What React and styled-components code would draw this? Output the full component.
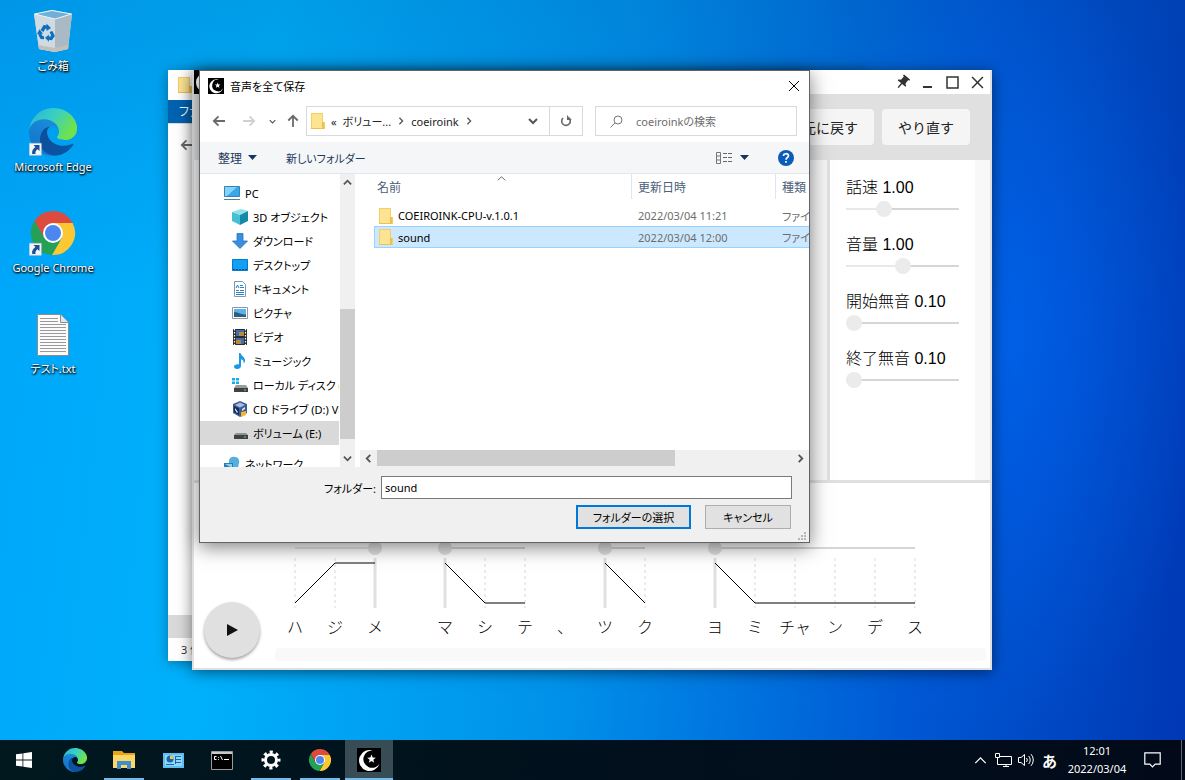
import { useId, useState } from 'react';
import styled, { createGlobalStyle, css } from 'styled-components';
import { MdPushPin } from 'react-icons/md';

const GlobalStyle = createGlobalStyle`
  * {
    box-sizing: border-box;
  }

  body {
    margin: 0;
    font-family: "Noto Sans", "Noto Sans CJK JP", sans-serif;
    font-size: 12px;
    font-feature-settings: "palt";
    color: #000;
  }

  button, input {
    font: inherit;
    font-feature-settings: inherit;
    color: inherit;
  }

  button {
    padding: 0;
    border: 0;
    background: none;
  }

  ul {
    margin: 0;
    padding: 0;
    list-style: none;
  }

  svg {
    display: block;
    flex: none;
  }
`

/* Desktop */
const Screen = styled.div`
  display: flex;
  flex-direction: column;
  height: 100vh;
  overflow: hidden;
`

const Desktop = styled.main`
  position: relative;
  flex: 1;
  min-height: 0;
  background:
    radial-gradient(ellipse 200px 400px at 85% 46%, rgba(0, 110, 255, 0.5), transparent),
    linear-gradient(180deg, rgba(0, 50, 120, 0.14), transparent 40%),
    linear-gradient(97deg, #00a6fa 0%, #00b0fb 22%, #0092ea 50%, #0058d4 78%, #0038b4 100%);
`

const DesktopIcons = styled.ul`
  width: 106px;
  padding-top: 7px;
`

const DesktopItem = styled.li`
  height: 101px;
`

const DesktopButton = styled.button`
  display: flex;
  flex-direction: column;
  align-items: center;
  gap: 1px;
  width: 100%;
  color: #fff;
  font-size: 11px;
  line-height: 20px;
  text-shadow: 0 1px 2px #000, 1px 1px 2px #000;
`

/* Windows */
const Window = styled.section`
  position: absolute;
  display: flex;
  flex-direction: column;
  background: #fff;
`

const ExplorerWindow = styled(Window)`
  top: 70px;
  left: 168px;
  right: 320px;
  bottom: 79px;
  box-shadow: 0 2px 12px rgba(0, 0, 0, 0.35);
`

const ExplorerTitle = styled.header`
  display: flex;
  align-items: center;
  height: 30px;
  padding-left: 10px;
`

const Ribbon = styled.div`
  height: 24px;
  padding-left: 11px;
  border-bottom: 1px solid #dadbdc;
  background: #0063b1;
  color: #fff;
  line-height: 23px;
`

const ExplorerNav = styled.div`
  flex: 1;
  padding: 14px 12px;
`

const ExplorerScroll = styled.div`
  height: 23px;
  background: #d9d9d9;
`

const ExplorerStatus = styled.footer`
  padding-left: 13px;
  color: #333;
  font-size: 11px;
  line-height: 23px;
`

/* Voice editor */
const EditorWindow = styled(Window)`
  top: 70px;
  left: 192px;
  right: 193px;
  bottom: 70px;
  border: 2px solid #e0e0e0;
  border-top: 0;
  box-shadow: 0 2px 14px rgba(0, 0, 0, 0.5);
  font-family: "Liberation Sans", "Noto Sans CJK JP", sans-serif;
  font-feature-settings: normal;
  font-weight: 300;
`

const EditorTitle = styled.header`
  display: flex;
  justify-content: space-between;
  height: 24px;
`

const WindowButtons = styled.div`
  display: flex;
`

const WindowButton = styled.button`
  display: grid;
  place-items: center;
  width: 25px;
  height: 24px;
  color: #333;
`

const PinIcon = styled(MdPushPin)`
  transform: rotate(40deg);
`

const EditorToolbar = styled.div`
  display: flex;
  justify-content: flex-end;
  gap: 8px;
  padding: 15px 20px;
  background: #e0e0e0;
`

const ToolbarButton = styled.button`
  height: 36px;
  padding: 0 16px;
  border-radius: 4px;
  background: #f5f5f5;
  color: #222;
  font-size: 14px;
  font-weight: 400;
`

const EditorBody = styled.div`
  display: flex;
  flex: 1;
  min-height: 0;
  border-bottom: 3px solid #e0e0e0;
`

const TextPane = styled.div`
  flex: 1;
  border-right: 3px solid #e0e0e0;
  background: #f6f6f6;
`

const ParamPane = styled.div`
  display: flex;
  flex-direction: column;
  gap: 16px;
  width: 160px;
  padding: 16px 31px 16px 16px;
  background: linear-gradient(270deg, #f8f8f8 15px, #fff 15px);
`

const Param = styled.div`
  display: grid;
  gap: 1px;

  label {
    font-size: 16px;
    line-height: 24px;
    white-space: nowrap;
  }
`

const Range = styled.input`
  display: block;
  width: 100%;
  height: ${p => p.$thumb}px;
  margin: 0;
  appearance: none;
  background: linear-gradient(90deg, #e8e8e8 ${p => p.$percent}%, #d6d6d6 ${p => p.$percent}%)
    center / ${p => p.$inset ? `calc(100% - ${p.$thumb}px)` : '100%'} 2px no-repeat;

  &::-webkit-slider-thumb {
    appearance: none;
    width: ${p => p.$thumb}px;
    height: ${p => p.$thumb}px;
    border-radius: 50%;
    background: ${p => p.$inset ? '#e0e0e0' : '#ebebeb'};
  }
`

const AccentPane = styled.div`
  display: flex;
  align-items: flex-end;
  height: 185px;
`

const PlayButton = styled.button`
  display: grid;
  place-items: center;
  width: 56px;
  height: 56px;
  margin: 0 15px 10px 10px;
  border-radius: 50%;
  background: #e0e0e0;
  box-shadow: 0 2px 3px rgba(0, 0, 0, 0.35);
`

const AccentArea = styled.div`
  flex: 1;
  min-width: 0;
  padding: 0 4px 7px 0;
`

const Phrases = styled.div`
  display: flex;
  align-items: flex-end;
  margin-bottom: 8px;
`

const PhraseBox = styled.div`
  display: flex;
  flex: none;
  flex-direction: column;
  gap: 3px;
  width: ${p => p.$count * 40}px;
  margin-right: ${p => p.$last ? '30px' : 0};
`

const PhraseSlider = styled.div`
  padding: 0 13px;
`

const Moras = styled.div`
  display: flex;
  padding-top: 5px;
`

const Mora = styled.span`
  flex: none;
  width: 40px;
  font-size: 16px;
  line-height: 24px;
  text-align: center;
`

const AccentScroll = styled.div`
  height: 13px;
  border-radius: 4px;
  background: #f9f9f9;
`

/* Folder dialog */
const DialogWindow = styled(Window)`
  top: 70px;
  left: 199px;
  right: 375px;
  bottom: 197px;
  border: 1px solid #636363;
  box-shadow: 0 4px 18px rgba(0, 0, 0, 0.5);
`

const DialogTitle = styled.header`
  display: flex;
  align-items: center;
  gap: 6px;
  height: 29px;
  padding: 0 9px 0 8px;

  h1 {
    flex: 1;
    margin: 0;
    font-size: 11px;
    font-weight: 400;
  }
`

const NavRow = styled.div`
  display: flex;
  align-items: center;
  padding: 6px 12px;
`

const NavButton = styled.button`
  display: grid;
  place-items: center;
  width: ${p => p.$width}px;
  height: 28px;
  margin-left: ${p => p.$gap || 0}px;
`

const AddressBar = styled.div`
  display: flex;
  flex: 1;
  align-items: center;
  height: 30px;
  margin: 0 12px 0 6px;
  border: 1px solid #d9d9d9;
`

const Crumbs = styled.div`
  display: flex;
  flex: 1;
  align-items: center;
  gap: 6px;
  padding-left: 4px;
  color: #222;
  font-size: 11px;
`

const RefreshButton = styled(NavButton)`
  border-left: 1px solid #d9d9d9;
`

const SearchBox = styled.label`
  display: flex;
  align-items: center;
  gap: 13px;
  width: 202px;
  height: 30px;
  padding-left: 14px;
  border: 1px solid #d9d9d9;

  input {
    flex: 1;
    min-width: 0;
    padding: 0;
    border: 0;
    outline: 0;
    background: none;
    font-size: 11px;
  }

  input::placeholder {
    color: #6d6d6d;
  }
`

const CommandBar = styled.div`
  display: flex;
  align-items: center;
  height: 32px;
  padding: 0 15px 0 18px;
  border-bottom: 1px solid #e3e8ee;
  background: #f5f6f7;
  color: #1e395b;
`

const CommandButton = styled.button`
  display: flex;
  align-items: center;
  gap: 6px;
  margin-right: ${p => p.$gap}px;
  font-size: ${p => p.$small ? 11 : 12}px;
`

const Spacer = styled.div`
  flex: 1;
`

const DialogBody = styled.div`
  display: flex;
  flex: 1;
  min-height: 0;
`

const Tree = styled.ul`
  width: 139px;
  padding-top: 7px;
  overflow: hidden;
`

const TreeItem = styled.li`
  margin-top: ${p => p.$apart ? '7px' : 0};
  background: ${p => p.$selected ? '#d9d9d9' : 'none'};
`

const TreeButton = styled.button`
  display: flex;
  align-items: center;
  gap: 5px;
  width: 100%;
  height: 24px;
  padding-left: ${p => p.$child ? 32 : 24}px;
  font-size: 11px;
  white-space: nowrap;
`

const ScrollTrack = styled.div`
  display: flex;
  flex-direction: ${p => p.$vertical ? 'column' : 'row'};
  background: #f0f0f0;
  ${p => p.$vertical ? css`
    width: 15px;
    margin: 0 5px 0 1px;
  ` : css`
    height: 17px;
    padding-bottom: 1px;
  `}
`

const ScrollButton = styled.button`
  display: grid;
  place-items: center;
  flex: 0 0 17px;
`

const ScrollPart = styled.div`
  flex: ${p => p.$grow} 0 0;
  background: ${p => p.$thumb ? '#cdcdcd' : 'none'};
`

const FileList = styled.div`
  display: flex;
  flex: 1;
  flex-direction: column;
  min-width: 0;
`

const TableArea = styled.div`
  flex: 1;
  padding-left: 14px;
  overflow: hidden;
`

const FileTable = styled.table`
  width: 100%;
  border-collapse: separate;
  border-spacing: 0;
  table-layout: fixed;
`

const HeadCell = styled.th`
  position: relative;
  width: ${p => p.$width ? `${p.$width}px` : 'auto'};
  height: 25px;
  padding: 0 0 0 ${p => p.$first ? 3 : 6}px;
  border-right: ${p => p.$end ? 0 : '1px solid #e2e6ea'};
  color: #4c607a;
  font-weight: 400;
  text-align: left;
  white-space: nowrap;

  svg {
    position: absolute;
    top: 0;
    left: 48%;
  }
`

const FileRow = styled.tr`
  td {
    height: ${p => p.$selected ? 22 : 21}px;
    padding: 0 0 0 6px;
    border: solid ${p => p.$selected ? '#99d1ff' : 'transparent'};
    border-width: ${p => p.$selected ? '1px 0' : 0};
    background: ${p => p.$selected ? '#cce8ff' : 'none'};
    color: #6d6d6d;
    font-size: 11px;
    white-space: nowrap;
    overflow: hidden;
  }

  td:first-child {
    padding-left: ${p => p.$selected ? 4 : 5}px;
    border-left-width: ${p => p.$selected ? '1px' : 0};
    color: #000;
  }
`

const TableGap = styled.tbody`
  td {
    height: 6px;
    padding: 0;
  }
`

const FileName = styled.span`
  display: flex;
  align-items: center;
  gap: 5px;
`

const DialogFooter = styled.form`
  display: flex;
  flex-direction: column;
  gap: 6px;
  padding: 9px 17px 13px 0;
  background: #f0f0f0;
`

const FolderField = styled.div`
  display: flex;
  align-items: center;
  gap: 5px;

  label {
    width: 176px;
    font-size: 11px;
    text-align: right;
  }

  input {
    flex: 1;
    min-width: 0;
    height: 23px;
    padding: 0 3px;
    border: 1px solid #7a7a7a;
    outline: 0;
    background: #fff;
    font-size: 11px;
  }
`

const DialogButtons = styled.div`
  display: flex;
  justify-content: flex-end;
  gap: 14px;
  padding-right: 1px;
`

const DialogButton = styled.button`
  width: ${p => p.$primary ? 115 : 86}px;
  height: 24px;
  border: ${p => p.$primary ? '2px solid #0078d7' : '1px solid #adadad'};
  background: #e1e1e1;
  font-size: 11px;
`

const Grip = styled.svg`
  position: absolute;
  right: 3px;
  bottom: 2px;
`

/* Taskbar */
const Taskbar = styled.footer`
  display: flex;
  height: 40px;
  background: linear-gradient(90deg, #01181f, #010f1c 60%, #020a19);
  color: #fff;
`

const TaskButton = styled.button`
  display: grid;
  place-items: center;
  position: relative;
  width: 48px;
  margin-right: ${p => p.$start ? 3 : 1}px;
  background: ${p => p.$active ? '#384c55' : 'none'};

  &::after {
    content: "";
    display: ${p => p.$open ? 'block' : 'none'};
    position: absolute;
    bottom: 0;
    width: ${p => p.$active ? '100%' : '40px'};
    height: 2px;
    background: #76b9ed;
  }
`

const TrayButton = styled.button`
  display: grid;
  place-items: center;
  width: ${p => p.$wide ? 38 : 23}px;
  font-size: 15px;
  font-weight: 700;
`

const Clock = styled.button`
  width: 72px;
  font-size: 11px;
  line-height: 18px;
`

const ShowDesktop = styled.button`
  width: 4px;
  margin-left: 10px;
  border-left: 1px solid #5a6470;
`

/* Icons */
const Logo = ({ size }) => (
  <svg width={size} height={size} viewBox="0 0 24 24">
    <path fill="#000" d="M0 0h24v24H0z" />
    <path fill="#fff" d="M16 2.500A10.500 10.500 0 1 0 22.600 15.500 8.700 8.700 0 1 1 16 2.500z" />
    <path fill="#fff" d="M14.500 6.600l1.100 3 3.200.1-2.500 2 .9 3.100-2.700-1.800-2.700 1.800.9-3.100-2.500-2 3.200-.1z" />
  </svg>
)

const Folder = () => (
  <svg width="14" height="16" viewBox="0 0 14 16">
    <path fill="#f4cf66" d="M0 0h12v9h2v7H0z" />
    <path fill="#fde493" d="M1 1h10v14H1z" />
    <path fill="#eec14e" d="M11 9h2v6h-2zM0 15h13v1H0z" />
  </svg>
)

const Shortcut = ({ y }) => (
  <g transform={`translate(0 ${y})`}>
    <path fill="#f4f6f8" stroke="#b9c4cc" strokeWidth=".6" d="M.3.300h12v12H.3z" />
    <path fill="#1c4f96" d="M4.500 2H10.500v6L8.500 6.200C6.600 7.500 6.200 9 6.500 11H3.200C2.600 8 4 5.700 6.400 4z" />
  </g>
)

const EdgeIcon = ({ size, shortcut }) => {
  const id = useId();
  return (
    <svg width={size} height={size} viewBox="0 0 48 48">
      <defs>
        <linearGradient id={id + 'a'} x1="0" y1="0" x2="1" y2=".5">
          <stop offset="0" stopColor="#2bb1dd" />
          <stop offset=".5" stopColor="#38cfc4" />
          <stop offset="1" stopColor="#70e34a" />
        </linearGradient>
        <linearGradient id={id + 'b'} x1=".8" y1="0" x2=".3" y2="1">
          <stop offset="0" stopColor="#1b8fdc" />
          <stop offset="1" stopColor="#1272c9" />
        </linearGradient>
        <linearGradient id={id + 'c'} x1="0" y1=".5" x2="1" y2=".6">
          <stop offset="0" stopColor="#0d4f9c" />
          <stop offset="1" stopColor="#0a56a5" />
        </linearGradient>
      </defs>
      <g transform="scale(.1875)">
        <path fill={`url(#${id}b)`} d="M105.700 241.400a79.200 79.200 0 0 1-22.700-21.300 80.700 80.700 0 0 1 29.500-120c3.200-1.500 8.400-4.100 15.500-4 10.100.1 19.600 4.900 25.700 13 4 5.300 6.300 11.900 6.300 18.700 0-.2 24.500-79.600-80-79.600-43.900 0-80 41.700-80 78.200-.2 19.300 4 38.500 12.100 56a128 128 0 0 0 156.400 67.100 75.400 75.400 0 0 1-62.800-8.100z" />
        <path fill={`url(#${id}c)`} d="M231 190.500c-3.400 1.800-6.900 3.400-10.500 4.700a101.700 101.700 0 0 1-35.900 6.500c-47.300 0-88.500-32.500-88.500-74.300.1-11.400 6.400-21.900 16.400-27.300-42.800 1.800-53.800 46.400-53.800 72.500 0 74 68.100 81.400 82.800 81.400 7.900 0 19.800-2.300 27-4.600l1.300-.4a128 128 0 0 0 66.600-52.800c1.200-1.900.6-4.300-1.200-5.500-1.300-.8-2.900-.9-4.200-.2z" />
        <path fill={`url(#${id}a)`} d="M152.300 148.900c-.9 1-3.400 2.500-3.400 5.600 0 2.600 1.700 5.200 4.800 7.300 14.400 10.100 41.700 8.700 41.800 8.700a60 60 0 0 0 30.500-8.400A61.500 61.500 0 0 0 256.400 109.200c.3-22.400-8-37.300-11.300-43.900C223.900 23.900 178.200 0 128.400 0a128 128 0 0 0-128 126.200c.5-36.500 36.800-66 80-66 3.500 0 23.500.3 42 10.100 16.300 8.500 24.900 18.900 30.800 29.200 6.200 10.700 7.300 24.200 7.300 29.600s-2.700 13.300-8.200 19.800z" />
      </g>
      {shortcut && <Shortcut y={35} />}
    </svg>
  )
}

const chromeArm = 'M24 14H43.600A22 22 0 0 0 5.540 12.030L15.340 29 24 24z';

const ChromeIcon = ({ size, shortcut }) => (
  <svg width={size} height={size} viewBox="0 0 48 48">
    <path fill="#fbc834" transform="rotate(120 24 24)" d={chromeArm} />
    <path fill="#24a057" transform="rotate(240 24 24)" d={chromeArm} />
    <path fill="#dd4b3e" d={chromeArm} />
    <circle cx="24" cy="24" r="10" fill="#fff" />
    <circle cx="24" cy="24" r="8" fill="#4d86ee" />
    {shortcut && <Shortcut y={34} />}
  </svg>
)

const RecycleBin = () => (
  <svg width="48" height="48" viewBox="0 0 48 48">
    <path fill="#c3d3dd" d="M5 7l18-4 20 4-4 35-13 3-16-3z" />
    <path fill="#a9bac4" d="M26 12l17-5-4 35-13 3z" />
    <path fill="#cfdae1" d="M5 7l21 5v33l-16-3z" />
    <path fill="#c4bfb8" d="M9.500 38l16.500 3 13.500-3-.5 4-13 3-16-3z" />
    <path fill="#6fb0d6" stroke="#eef4f8" d="M5.500 7L23 3.500 42.500 7 26 12z" />
    <g transform="translate(17.500 25.500) skewY(6)">
      <path fill="none" stroke="#0b6fc2" strokeWidth="3.200" d="M-4.500-1l2.500-4.500h3M4.500-1.500l2 4-2 3H2M-2.500 5.500h-2.500l-2-3.500" />
      <path fill="#0b6fc2" d="M0-9l4.500 4L0-1.500zM2.500 2v7L-1.500 5.500zM-9.500 2.500l2.500-5 3.500 4z" />
    </g>
  </svg>
)

const TextFile = () => (
  <svg width="48" height="48" viewBox="0 0 48 48">
    <path fill="#fbfbfb" stroke="#8c8c8c" d="M8.500 4.500h23l8 8v33h-31z" />
    <path fill="#e6e6e6" stroke="#8c8c8c" d="M31.500 4.500v8h8" />
    <path stroke="#9a9a9a" d="M11 8.500h18M11 11.500h18M11 14.500h26M11 17.500h26M11 20.500h26M11 23.500h26M11 26.500h26M11 29.500h26M11 32.500h26M11 35.500h26M11 38.500h26M11 41.500h26" />
  </svg>
)

const Arrow = ({ color = '#6a6a6a', turn = 0 }) => (
  <svg width="14" height="14" viewBox="0 0 14 14">
    <path fill="none" stroke={color} strokeWidth="1.800" transform={`rotate(${turn} 7 7)`} d="M13 7H2M6.500 2.300L1.800 7l4.700 4.700" />
  </svg>
)

const Chevron = ({ size = 9, turn = 0, color = '#555', weight = 1.6 }) => (
  <svg width={size} height={size} viewBox="0 0 10 10">
    <path fill="none" stroke={color} strokeWidth={weight} transform={`rotate(${turn} 5 5)`} d="M1 3l4 4 4-4" />
  </svg>
)

const Caret = () => (
  <svg width="9" height="5" viewBox="0 0 9 5">
    <path fill="#17365d" d="M0 0h9L4.500 5z" />
  </svg>
)

const Cross = ({ size, color = '#000', weight = 1 }) => (
  <svg width={size} height={size} viewBox="0 0 12 12">
    <path fill="none" stroke={color} strokeWidth={weight} d="M1 1l10 10M11 1L1 11" />
  </svg>
)

const treeDrawings = {
  pc: (
    <>
      <path fill="#35a7ea" stroke="#3d7fae" d="M.5 1.500h15v10H.5z" />
      <path fill="#84d3fa" d="M1 2h12L3 11H1z" />
      <path fill="#547f9c" d="M0 14h16v1H0z" />
    </>
  ),
  cube: (
    <>
      <path fill="#8fe3ec" d="M0 3l9-3 7 2-8 4z" />
      <path fill="#47bfd3" d="M0 3l8 3v10l-8-4z" />
      <path fill="#148aa8" d="M8 6l8-4v10l-8 4z" />
    </>
  ),
  download: <path fill="#3a8ee0" stroke="#2672bd" strokeWidth=".8" d="M5 .5h6V8h4.500L8 15.500.5 8H5z" />,
  desktop: (
    <>
      <path fill="#12a0f4" stroke="#0a78c4" d="M.5 2.500h15v11H.5z" />
      <path stroke="#0a4f8d" strokeDasharray="2 1" d="M1 12.500h14" />
    </>
  ),
  document: (
    <>
      <path fill="#fff" stroke="#7d98ad" d="M2.500.5h8l3 3v12h-11z" />
      <path fill="none" stroke="#2f80c3" d="M4 7l1.500-3L7 7M8 4.500h3M8 6.500h4M4 9.500h3M8 9.500h4M4 11.500h8M4 13.500h8" />
    </>
  ),
  picture: (
    <>
      <path fill="#fff" stroke="#8d9aa5" d="M.5 2.500h15v11H.5z" />
      <path fill="#5ab3ec" d="M2 4h12v5H2z" />
      <path fill="#2e5e79" d="M2 7c4 0 6 3 12 2v3H2z" />
    </>
  ),
  video: (
    <>
      <path fill="#2b2b2b" d="M1 0h14v16H1z" />
      <path fill="#3f6db3" d="M4 1h8v6H4z" />
      <path fill="#b08d36" d="M7 3h5v4H7zM4 11h5v4H4z" />
      <path fill="#3f6db3" d="M4 9h8v2H4zM9 11h3v4H9z" />
      <path stroke="#fff" strokeWidth="1.200" strokeDasharray="1.500 1.500" d="M2.500 0v16M13.500 0v16" />
    </>
  ),
  music: <path fill="#1c97e8" d="M7 0h1.500c.5 3 5 4 4.500 8-.1 1-.6 2-1.300 2.500C12 8 11 6.800 9 6.300V13c0 2-2 3-4 3s-3-1-3-2.500S4 11 7 11.300z" />,
  disk: (
    <>
      <path fill="#14aee8" d="M0 1h3v2.500H0zM4 1h3v2.500H4zM0 4.500h3V7H0zM4 4.500h3V7H4z" />
      <path fill="#9a9d9f" d="M4 8h10l2 3H2z" />
      <path fill="#3e4244" d="M2 11h14v4H2z" />
      <path fill="#5fe05f" d="M12 12.500h2v1h-2z" />
    </>
  ),
  cd: (
    <>
      <path fill="#3c5b96" d="M8 0l7 3v9l-7 4-7-4V3z" />
      <path fill="#a9bddd" d="M8 1.500L13 4 8 6.500 3 4z" />
      <path fill="#172b55" d="M2 5l5 2.500V14l-5-3z" />
      <path fill="#dfe6f2" d="M3 7l3 4-1 1-2-3zM10 8l3-2v2l-3 2z" />
      <path fill="#f2b632" d="M9 11l5-1v4l-5 2z" />
    </>
  ),
  volume: (
    <>
      <path fill="#8f9294" d="M4 8h10l2 2H2z" />
      <path fill="#3e4244" d="M2 10h14v4H2z" />
      <path fill="#5fe05f" d="M12 11.500h2v1h-2z" />
    </>
  ),
  network: (
    <>
      <path fill="#57aede" d="M5 5c0-3 3-5 6-4 3 0 5 3 4 6l-1 5H5z" />
      <path fill="#2c7fb3" d="M0 7h9v6H0z" />
      <path fill="#8dd0f0" d="M1 8h7v4z" />
    </>
  ),
}

const TreeIcon = ({ name }) => (
  <svg width="16" height="16" viewBox="0 0 16 16">{treeDrawings[name]}</svg>
)

const places = [
  { icon: 'pc', name: 'PC' },
  { icon: 'cube', name: '3D オブジェクト', child: true },
  { icon: 'download', name: 'ダウンロード', child: true },
  { icon: 'desktop', name: 'デスクトップ', child: true },
  { icon: 'document', name: 'ドキュメント', child: true },
  { icon: 'picture', name: 'ピクチャ', child: true },
  { icon: 'video', name: 'ビデオ', child: true },
  { icon: 'music', name: 'ミュージック', child: true },
  { icon: 'disk', name: 'ローカル ディスク (C:)', child: true },
  { icon: 'cd', name: 'CD ドライブ (D:) VirtualBox', child: true },
  { icon: 'volume', name: 'ボリューム (E:)', child: true, selected: true },
  { icon: 'network', name: 'ネットワーク', apart: true },
]

const files = [
  { name: 'COEIROINK-CPU-v.1.0.1', date: '2022/03/04 11:21' },
  { name: 'sound', date: '2022/03/04 12:00', selected: true },
]

const params = [
  { name: '話速', value: 1, percent: 31 },
  { name: '音量', value: 1, percent: 50 },
  { name: '開始無音', value: 0.1, percent: 0 },
  { name: '終了無音', value: 0.1, percent: 0 },
]

const phrases = [
  { moras: ['ハ', 'ジ', 'メ'], pitch: [0, 1, 1], accent: 2, last: true },
  { moras: ['マ', 'シ', 'テ'], pitch: [1, 0, 0], accent: 0, pause: true },
  { moras: ['ツ', 'ク'], pitch: [1, 0], accent: 0, last: true },
  { moras: ['ヨ', 'ミ', 'チャ', 'ン', 'デ', 'ス'], pitch: [1, 0, 0, 0, 0, 0], accent: 0 },
]

const ParamSlider = ({ name, value, percent }) => {
  const id = useId();
  const [position, setPosition] = useState(percent);
  return (
    <Param>
      <label htmlFor={id}>{name} {value.toFixed(2)}</label>
      <Range
        id={id}
        type='range'
        value={position}
        $percent={position}
        $thumb={16}
        onChange={e => setPosition(Number(e.target.value))}
      />
    </Param>
  )
}

const Phrase = ({ moras, pitch, accent, last, pause }) => {
  const [mark, setMark] = useState(accent);
  const max = moras.length - 1;
  const x = i => 20 + i * 40;
  return (
    <>
      <PhraseBox $count={moras.length} $last={last}>
        <PhraseSlider>
          <Range
            type='range'
            aria-label={moras.join('')}
            min={0}
            max={max}
            value={mark}
            $percent={mark / max * 100}
            $thumb={14}
            $inset
            onChange={e => setMark(Number(e.target.value))}
          />
        </PhraseSlider>
        <svg width={moras.length * 40} height="50">
          {moras.map((m, i) => i === mark
            ? <line key={i} x1={x(i)} x2={x(i)} y1="0" y2="50" stroke="#e0e0e0" strokeWidth="3" />
            : <line key={i} x1={x(i)} x2={x(i)} y1="0" y2="50" stroke="#ececec" strokeWidth="2" strokeDasharray="3 3" />
          )}
          <polyline fill="none" stroke="#000" points={pitch.map((p, i) => `${x(i)},${p ? 5 : 45}`).join(' ')} />
        </svg>
        <Moras>
          {moras.map((m, i) => <Mora key={i}>{m}</Mora>)}
        </Moras>
      </PhraseBox>
      {pause && <Mora>、</Mora>}
    </>
  )
}

const Editor = () => (
  <EditorWindow aria-label='COEIROINK'>
    <EditorTitle>
      <Logo size={24} />
      <WindowButtons>
        <WindowButton aria-label='最前面に表示'><PinIcon size={17} /></WindowButton>
        <WindowButton aria-label='最小化'>
          <svg width="12" height="14"><path fill="#333" d="M1 11h9v2H1z" /></svg>
        </WindowButton>
        <WindowButton aria-label='最大化'>
          <svg width="13" height="13"><path fill="none" stroke="#333" strokeWidth="1.500" d="M1 1h11v11H1z" /></svg>
        </WindowButton>
        <WindowButton aria-label='閉じる'><Cross size={13} color="#333" weight={1.4} /></WindowButton>
      </WindowButtons>
    </EditorTitle>
    <EditorToolbar>
      <ToolbarButton>元に戻す</ToolbarButton>
      <ToolbarButton>やり直す</ToolbarButton>
    </EditorToolbar>
    <EditorBody>
      <TextPane />
      <ParamPane>
        {params.map(p => <ParamSlider key={p.name} {...p} />)}
      </ParamPane>
    </EditorBody>
    <AccentPane>
      <PlayButton aria-label='再生'>
        <svg width="12" height="14"><path fill="#111" d="M1 1l11 6-11 6z" /></svg>
      </PlayButton>
      <AccentArea>
        <Phrases>
          {phrases.map((p, i) => <Phrase key={i} {...p} />)}
        </Phrases>
        <AccentScroll />
      </AccentArea>
    </AccentPane>
  </EditorWindow>
)

const FolderDialog = () => {
  const [folder, setFolder] = useState('sound');
  return (
    <DialogWindow role='dialog' aria-label='音声を全て保存'>
      <DialogTitle>
        <Logo size={16} />
        <h1>音声を全て保存</h1>
        <button aria-label='閉じる'><Cross size={12} /></button>
      </DialogTitle>
      <NavRow>
        <NavButton $width={14} aria-label='戻る'><Arrow /></NavButton>
        <NavButton $width={14} $gap={16} aria-label='進む'><Arrow color="#d0d0d0" turn={180} /></NavButton>
        <NavButton $width={8} $gap={12} aria-label='履歴'><Chevron size={7} /></NavButton>
        <NavButton $width={14} $gap={10} aria-label='上へ'><Arrow turn={90} /></NavButton>
        <AddressBar>
          <Crumbs>
            <Folder />
            <span>«</span>
            <span>ボリュー...</span>
            <Chevron size={8} turn={-90} />
            <span>coeiroink</span>
            <Chevron size={8} turn={-90} />
          </Crumbs>
          <NavButton $width={32} aria-label='以前の場所'><Chevron size={10} weight={2} /></NavButton>
          <RefreshButton $width={33} aria-label='更新'>
            <svg width="12" height="12" viewBox="0 0 12 12">
              <path fill="none" stroke="#666" strokeWidth="1.600" d="M8.500 2.600A4.300 4.300 0 1 1 3 3" />
              <path fill="#666" d="M7 0v5h5L10 3.500z" />
            </svg>
          </RefreshButton>
        </AddressBar>
        <SearchBox>
          <svg width="13" height="13" viewBox="0 0 13 13">
            <circle cx="8" cy="5" r="4" fill="none" stroke="#777" />
            <path stroke="#777" d="M5 8L.5 12.500" />
          </svg>
          <input type='text' aria-label='検索' placeholder='coeiroinkの検索' />
        </SearchBox>
      </NavRow>
      <CommandBar>
        <CommandButton $gap={29}>整理 <Caret /></CommandButton>
        <CommandButton $small $gap={0}>新しいフォルダー</CommandButton>
        <Spacer />
        <CommandButton $gap={29} aria-label='表示方法'>
          <svg width="18" height="12" viewBox="0 0 18 12">
            <path fill="none" stroke="#777" d="M.5.500h4v11h-4zM.5 4h4M.5 8h4" />
            <path stroke="#666" strokeDasharray="4 1" d="M7 1.500h9M7 5.500h9M7 9.500h9" />
          </svg>
          <Caret />
        </CommandButton>
        <CommandButton $gap={0} aria-label='ヘルプ'>
          <svg width="16" height="16" viewBox="0 0 16 16">
            <circle cx="8" cy="8" r="8" fill="#0a5cb8" />
            <path fill="none" stroke="#fff" strokeWidth="1.700" d="M5.500 6C5.500 3 10.500 3 10.500 5.800 10.500 7.500 8 7.600 8 9.800M8 11v1.800" />
          </svg>
        </CommandButton>
      </CommandBar>
      <DialogBody>
        <Tree>
          {places.map(p => (
            <TreeItem key={p.name} $selected={p.selected} $apart={p.apart}>
              <TreeButton $child={p.child}>
                <TreeIcon name={p.icon} />
                {p.name}
              </TreeButton>
            </TreeItem>
          ))}
        </Tree>
        <ScrollTrack $vertical>
          <ScrollButton aria-label='上へスクロール'><Chevron turn={180} weight={2} /></ScrollButton>
          <ScrollPart $grow={118} />
          <ScrollPart $grow={130} $thumb />
          <ScrollPart $grow={11} />
          <ScrollButton aria-label='下へスクロール'><Chevron weight={2} /></ScrollButton>
        </ScrollTrack>
        <FileList>
          <TableArea>
            <FileTable>
              <thead>
                <tr>
                  <HeadCell $first>
                    <Chevron turn={180} weight={1} />
                    名前
                  </HeadCell>
                  <HeadCell $width={144}>更新日時</HeadCell>
                  <HeadCell $width={33} $end>種類</HeadCell>
                </tr>
              </thead>
              <TableGap aria-hidden='true'><tr><td /></tr></TableGap>
              <tbody>
                {files.map(f => (
                  <FileRow key={f.name} $selected={f.selected}>
                    <td><FileName><Folder />{f.name}</FileName></td>
                    <td>{f.date}</td>
                    <td>ファイル フォルダー</td>
                  </FileRow>
                ))}
              </tbody>
            </FileTable>
          </TableArea>
          <ScrollTrack>
            <ScrollButton aria-label='左へスクロール'><Chevron turn={90} weight={2} /></ScrollButton>
            <ScrollPart $grow={298} $thumb />
            <ScrollPart $grow={117} />
            <ScrollButton aria-label='右へスクロール'><Chevron turn={-90} weight={2} /></ScrollButton>
          </ScrollTrack>
        </FileList>
      </DialogBody>
      <DialogFooter onSubmit={e => e.preventDefault()}>
        <FolderField>
          <label htmlFor='folder'>フォルダー:</label>
          <input id='folder' type='text' value={folder} onChange={e => setFolder(e.target.value)} />
        </FolderField>
        <DialogButtons>
          <DialogButton $primary type='submit'>フォルダーの選択</DialogButton>
          <DialogButton type='button'>キャンセル</DialogButton>
        </DialogButtons>
      </DialogFooter>
      <Grip width="9" height="9">
        <path fill="#b5b5b5" d="M7 1h2v2H7zM4 4h2v2H4zM7 4h2v2H7zM1 7h2v2H1zM4 7h2v2H4zM7 7h2v2H7z" />
      </Grip>
    </DialogWindow>
  )
}

const App = () => {
  return (
    <Screen>
      <GlobalStyle />
      <Desktop>
        <DesktopIcons>
          <DesktopItem><DesktopButton><RecycleBin />ごみ箱</DesktopButton></DesktopItem>
          <DesktopItem><DesktopButton><EdgeIcon size={48} shortcut />Microsoft Edge</DesktopButton></DesktopItem>
          <DesktopItem><DesktopButton><ChromeIcon size={48} shortcut />Google Chrome</DesktopButton></DesktopItem>
          <DesktopItem><DesktopButton><TextFile />テスト.txt</DesktopButton></DesktopItem>
        </DesktopIcons>

        <ExplorerWindow aria-label='エクスプローラー'>
          <ExplorerTitle><Folder /></ExplorerTitle>
          <Ribbon>ファイル</Ribbon>
          <ExplorerNav><Arrow /></ExplorerNav>
          <ExplorerScroll />
          <ExplorerStatus>3 個の項目</ExplorerStatus>
        </ExplorerWindow>
        <Editor />
        <FolderDialog />
      </Desktop>

      <Taskbar>
        <TaskButton $start aria-label='スタート'>
          <svg width="16" height="16" viewBox="0 0 16 16">
            <path fill="#fff" d="M0 2.300l6.500-.9v6.200H0zM7.300 1.300L16 0v7.600H7.300zM0 8.400h6.500v6.200L0 13.700zM7.300 8.400H16V16l-8.700-1.300z" />
          </svg>
        </TaskButton>
        <TaskButton aria-label='Microsoft Edge'><EdgeIcon size={24} /></TaskButton>
        <TaskButton $open aria-label='エクスプローラー'>
          <svg width="22" height="18" viewBox="0 0 22 18">
            <path fill="#e8a317" d="M0 0h9l2 2h11v4H0z" />
            <path fill="#fcd667" d="M0 4h22v13H0z" />
            <path fill="#3f8fd0" d="M4 10h14v8h-4v-4H8v4H4z" />
          </svg>
        </TaskButton>
        <TaskButton aria-label='コントロール パネル'>
          <svg width="21" height="15" viewBox="0 0 21 15">
            <path fill="#5cc0f3" d="M0 0h21v15H0z" />
            <path fill="#fff" d="M2 2h17v11H2z" opacity=".35" />
            <circle cx="7" cy="6" r="3.500" fill="#1766b0" />
            <path fill="#f7c443" d="M7 6V2.500A3.500 3.500 0 0 1 10.500 6z" />
            <path stroke="#1766b0" d="M13 3.500h5M13 6.500h5M13 9.500h5M3 11.500h8M12.500 3v8" />
          </svg>
        </TaskButton>
        <TaskButton aria-label='コマンド プロンプト'>
          <svg width="22" height="19" viewBox="0 0 22 19">
            <path fill="#000" stroke="#9a9a9a" d="M.5.500h21v18H.5z" />
            <path fill="#c8c8c8" d="M1 1h20v2H1z" />
            <path fill="none" stroke="#fff" d="M5.500 5.500h-2v3h2M7.500 6v.8M7.500 8v.8M9.500 5l2 4M13 8.500h5" />
          </svg>
        </TaskButton>
        <TaskButton $open aria-label='設定'>
          <svg width="20" height="20" viewBox="0 0 20 20">
            <circle cx="10" cy="10" r="5.500" fill="none" stroke="#fff" strokeWidth="3" />
            <circle cx="10" cy="10" r="8" fill="none" stroke="#fff" strokeWidth="3" strokeDasharray="3.140 3.140" strokeDashoffset="1.570" />
          </svg>
        </TaskButton>
        <TaskButton $open aria-label='Google Chrome'><ChromeIcon size={24} /></TaskButton>
        <TaskButton $open $active aria-label='COEIROINK'><Logo size={24} /></TaskButton>
        <Spacer />
        <TrayButton aria-label='隠れているインジケーターを表示'><Chevron size={13} turn={180} color="#fff" weight={1} /></TrayButton>
        <TrayButton aria-label='ネットワーク'>
          <svg width="17" height="15" viewBox="0 0 17 15">
            <path fill="none" stroke="#fff" d="M5 3.500h11.500v8H5.500M8 13.500h6M11 11.500v2M.5.500h4v4h-4zM2.500 4.500v7H6" />
          </svg>
        </TrayButton>
        <TrayButton aria-label='音量'>
          <svg width="17" height="14" viewBox="0 0 17 14">
            <path fill="none" stroke="#fff" d="M.5 4.500h2.500l3.500-3v11L3 9.500H.5zM8.500 5a3 3 0 0 1 0 4M10.700 3a6 6 0 0 1 0 8M13 1.200a8.500 8.500 0 0 1 0 11.600" />
          </svg>
        </TrayButton>
        <TrayButton aria-label='入力モード'>あ</TrayButton>
        <Clock>12:01<br />2022/03/04</Clock>
        <TrayButton $wide aria-label='通知'>
          <svg width="17" height="16" viewBox="0 0 17 16">
            <path fill="none" stroke="#fff" strokeWidth="1.200" d="M.8.800h15.400v11.400h-5L8.500 15l-2.700-2.800h-5z" />
          </svg>
        </TrayButton>
        <ShowDesktop aria-label='デスクトップの表示' />
      </Taskbar>
    </Screen>
  )
}

export default App;
